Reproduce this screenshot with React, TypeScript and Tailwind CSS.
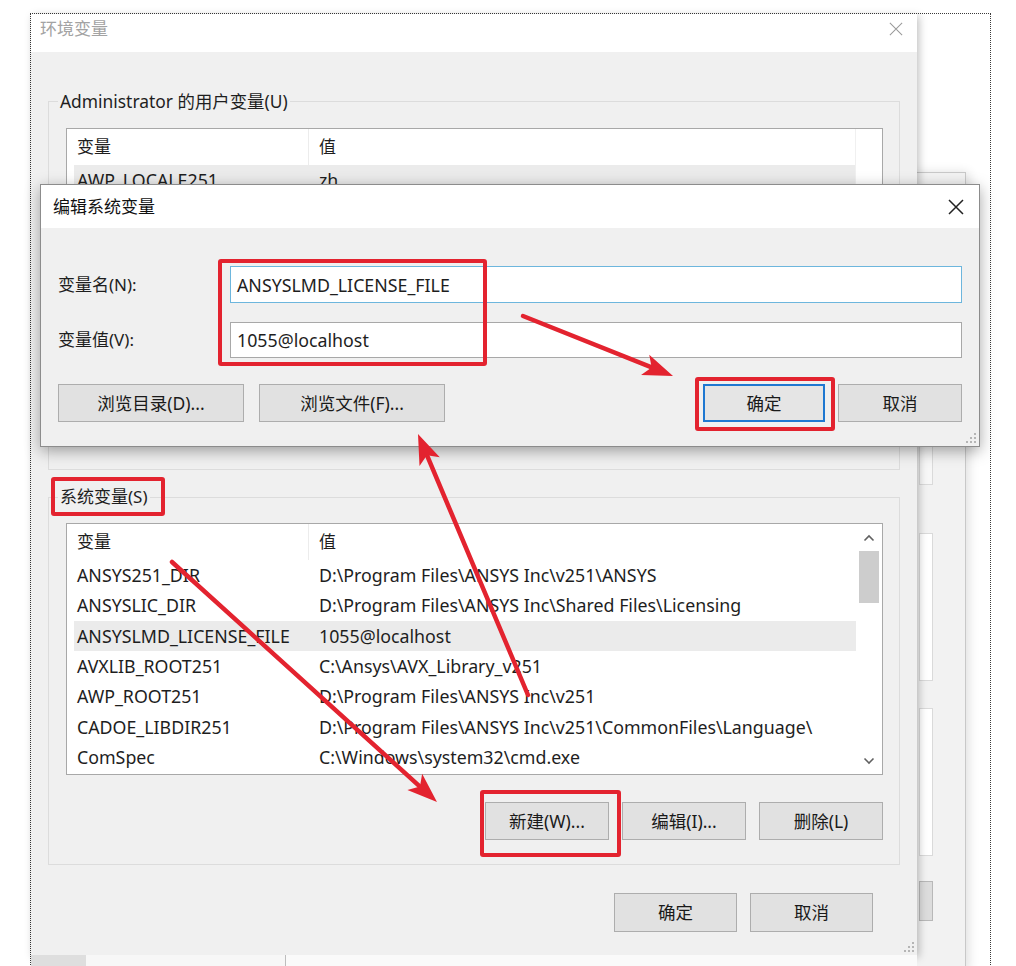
import React from 'react';

const RED = '#e3232f';

type Row = { name: string; value: string; selected?: boolean };

const userRows: Row[] = [{ name: 'AWP_LOCALE251', value: 'zh', selected: true }];

const sysRows: Row[] = [
  { name: 'ANSYS251_DIR', value: 'D:\\Program Files\\ANSYS Inc\\v251\\ANSYS' },
  { name: 'ANSYSLIC_DIR', value: 'D:\\Program Files\\ANSYS Inc\\Shared Files\\Licensing' },
  { name: 'ANSYSLMD_LICENSE_FILE', value: '1055@localhost', selected: true },
  { name: 'AVXLIB_ROOT251', value: 'C:\\Ansys\\AVX_Library_v251' },
  { name: 'AWP_ROOT251', value: 'D:\\Program Files\\ANSYS Inc\\v251' },
  { name: 'CADOE_LIBDIR251', value: 'D:\\Program Files\\ANSYS Inc\\v251\\CommonFiles\\Language\\' },
  { name: 'ComSpec', value: 'C:\\Windows\\system32\\cmd.exe' },
];

// ---------------------- Icons ----------------------
function CloseIcon({ size, color, width }: { size: number; color: string; width: number }) {
  return (
    <svg width={size} height={size} viewBox="0 0 16 16">
      <path d="M1 1 L15 15 M15 1 L1 15" stroke={color} strokeWidth={width} fill="none" />
    </svg>
  );
}

function Chevron({ up }: { up?: boolean }) {
  return (
    <svg width="12" height="8" viewBox="0 0 12 8">
      <path d={up ? 'M1.5 6.5 L6 2 L10.5 6.5' : 'M1.5 1.5 L6 6 L10.5 1.5'} stroke="#606060" strokeWidth="1.6" fill="none" />
    </svg>
  );
}

function Grip() {
  return (
    <svg width="10" height="10" viewBox="0 0 10 10" className="absolute right-[3px] bottom-[3px]">
      <rect x="8" y="0" width="2" height="2" fill="#b5b5b5" />
      <rect x="4" y="4" width="2" height="2" fill="#b5b5b5" />
      <rect x="8" y="4" width="2" height="2" fill="#b5b5b5" />
      <rect x="0" y="8" width="2" height="2" fill="#b5b5b5" />
      <rect x="4" y="8" width="2" height="2" fill="#b5b5b5" />
      <rect x="8" y="8" width="2" height="2" fill="#b5b5b5" />
    </svg>
  );
}

function Arrow({ x1, y1, x2, y2 }: { x1: number; y1: number; x2: number; y2: number }) {
  const dx = x2 - x1;
  const dy = y2 - y1;
  const len = Math.hypot(dx, dy);
  const ux = dx / len;
  const uy = dy / len;
  const head = 30;
  const half = 11;
  const bx = x2 - ux * head;
  const by = y2 - uy * head;
  const nx = bx + ux * 7;
  const ny = by + uy * 7;
  const px = -uy;
  const py = ux;
  const pts = `${x2},${y2} ${bx + px * half},${by + py * half} ${nx},${ny} ${bx - px * half},${by - py * half}`;
  return (
    <g>
      <line x1={x1} y1={y1} x2={nx} y2={ny} stroke={RED} strokeWidth={4.5} strokeLinecap="round" />
      <polygon points={pts} fill={RED} />
    </g>
  );
}

// ---------------------- Pieces ----------------------
function WinButton({ children, className = '', focus }: { children: React.ReactNode; className?: string; focus?: boolean }) {
  return (
    <button
      className={`flex items-center justify-center text-[17.5px] text-[#1a1a1a] ${
        focus ? 'border-2 border-[#1f78d1] bg-[#e5e5e5]' : 'border border-[#adadad] bg-[#e1e1e1]'
      } ${className}`}
    >
      {children}
    </button>
  );
}

function VarList({ rows, heightClass, scroll }: { rows: Row[]; heightClass: string; scroll?: boolean }) {
  return (
    <div className={`${heightClass} flex border border-[#a8a8a8] bg-white overflow-hidden`}>
      <div className="flex-1 flex flex-col">
        <div className="h-[36px] flex items-stretch shrink-0">
          <div className="w-[242px] pl-[10px] flex items-center border-r border-[#ececec]">变量</div>
          <div className="pl-[10px] flex items-center">值</div>
        </div>
        {rows.map((r) => (
          <div
            key={r.name}
            className={`h-[30.3px] shrink-0 ml-[7px] flex items-center leading-[20px] text-[17.8px] ${r.selected ? 'bg-[#ebebeb]' : ''}`}
          >
            <div className="w-[235px] pl-[3px] whitespace-nowrap">{r.name}</div>
            <div className="pl-[10px] whitespace-nowrap">{r.value}</div>
          </div>
        ))}
      </div>
      {scroll ? (
        <div className="w-[26px] flex flex-col items-center">
          <div className="h-[27px] flex items-center justify-center">
            <Chevron up />
          </div>
          <div className="w-[20px] h-[52px] bg-[#cdcdcd]" />
          <div className="flex-1" />
          <div className="h-[26px] flex items-center justify-center">
            <Chevron />
          </div>
        </div>
      ) : (
        <div className="w-[27px] border-l border-[#f0f0f0]" />
      )}
    </div>
  );
}

function RedBox({ className }: { className: string }) {
  return <div className={`absolute border-4 border-[#e3232f] rounded-[3px] ${className}`} />;
}

// ---------------------- Page ----------------------
export default function App() {
  return (
    <div className="relative w-[1016px] h-[966px] bg-white overflow-hidden font-['Noto_Sans','Noto_Sans_CJK_SC',sans-serif] text-[17px] text-[#1e1e1e]">
      {/* capture frame */}
      <div className="absolute left-[30px] top-[13px] w-[961px] h-[980px] border border-dotted border-[#3a3a3a]" />

      {/* window behind */}
      <div className="absolute left-[890px] top-[172px] w-[76px] h-[800px] bg-[#f2f2f2] border border-[#c8c8c8] shadow-[3px_0_10px_rgba(0,0,0,0.12)] flex flex-col pl-[28px] pt-[12px]">
        <div className="w-[14px] h-[300px] border border-[#dadada] bg-[#f7f7f7]" />
        <div className="w-[14px] h-[148px] mt-[48px] border border-[#dadada] bg-white" />
        <div className="w-[14px] h-[148px] mt-[27px] border border-[#dadada] bg-white" />
        <div className="w-[14px] h-[40px] mt-[25px] border border-[#b8b8b8] bg-[#dcdcdc]" />
      </div>

      {/* 环境变量 */}
      <div className="absolute left-[31px] top-[14px] w-[886px] h-[941px] flex flex-col bg-[#f0f0f0] shadow-[2px_2px_8px_rgba(0,0,0,0.25)]">
        <div className="h-[38px] shrink-0 bg-white flex items-center justify-between pl-[9px] pr-[14px] pb-[9px]">
          <span className="text-[#a3a3a3]">环境变量</span>
          <CloseIcon size={14} color="#9a9a9a" width={1.2} />
        </div>
        <div className="flex-1 flex flex-col px-[17px]">
          <fieldset className="mt-[38px] h-[380px] border border-[#dcdcdc] pl-[17px] pr-[16px]">
            <legend className="-ml-[8px] px-[2px] leading-[22px] text-[17.4px]">Administrator 的用户变量(U)</legend>
            <div className="mt-[16px]">
              <VarList rows={userRows} heightClass="h-[272px]" />
            </div>
          </fieldset>

          <fieldset className="mt-[16px] border border-[#dcdcdc] pl-[17px] pr-[16px] pb-[24px]">
            <legend className="-ml-[8px] px-[2px] leading-[22px]">系统变量(S)</legend>
            <div className="mt-[15px]">
              <VarList rows={sysRows} heightClass="h-[252px]" scroll />
            </div>
            <div className="mt-[27px] flex justify-end gap-[13px]">
              <WinButton className="w-[124px] h-[38px]">新建(W)...</WinButton>
              <WinButton className="w-[124px] h-[38px]">编辑(I)...</WinButton>
              <WinButton className="w-[124px] h-[38px]">删除(L)</WinButton>
            </div>
          </fieldset>

          <div className="mt-[28px] mr-[27px] flex justify-end gap-[13px]">
            <WinButton className="w-[123px] h-[39px]">确定</WinButton>
            <WinButton className="w-[123px] h-[39px]">取消</WinButton>
          </div>
        </div>
        <Grip />
      </div>

      {/* strip under the main window */}
      <div className="absolute left-[31px] top-[955px] w-[886px] h-[11px] flex">
        <div className="w-[55px] bg-[#dedede]" />
        <div className="w-[200px] bg-[#f7f7f7] border-r border-[#bdbdbd]" />
        <div className="flex-1 bg-[#fafafa]" />
      </div>

      {/* 编辑系统变量 */}
      <div className="absolute left-[40px] top-[184px] w-[940px] h-[263px] flex flex-col bg-[#f0f0f0] border border-[#8c8c8c] shadow-[0_4px_14px_rgba(0,0,0,0.35)]">
        <div className="h-[43px] shrink-0 bg-white flex items-center justify-between pl-[12px] pr-[15px]">
          <span className="text-[#111] leading-[22px]">编辑系统变量</span>
          <CloseIcon size={16} color="#222" width={1.5} />
        </div>
        <div className="flex-1 flex flex-col pt-[38px] px-[17px]">
          <div className="h-[37px] flex items-center">
            <span className="w-[172px] leading-[22px]">变量名(N):</span>
            <div className="flex-1 h-full flex items-center pl-[6px] bg-white border border-[#6db6dd] text-[17.8px] leading-[22px]">
              ANSYSLMD_LICENSE_FILE
            </div>
          </div>
          <div className="mt-[19px] h-[36px] flex items-center">
            <span className="w-[172px] leading-[22px]">变量值(V):</span>
            <div className="flex-1 h-full flex items-center pl-[6px] bg-white border border-[#a8a8a8] text-[17.8px] leading-[22px]">
              1055@localhost
            </div>
          </div>
          <div className="mt-[26px] flex items-center">
            <WinButton className="w-[186px] h-[38px]">浏览目录(D)...</WinButton>
            <WinButton className="ml-[15px] w-[186px] h-[38px]">浏览文件(F)...</WinButton>
            <div className="flex-1" />
            <WinButton focus className="w-[122px] h-[38px]">
              确定
            </WinButton>
            <WinButton className="ml-[13px] w-[124px] h-[38px]">取消</WinButton>
          </div>
        </div>
        <Grip />
      </div>

      {/* annotations */}
      <RedBox className="left-[218px] top-[259px] w-[269px] h-[107px]" />
      <RedBox className="left-[695px] top-[377px] w-[140px] h-[54px]" />
      <RedBox className="left-[51px] top-[477px] w-[114px] h-[39px]" />
      <RedBox className="left-[480px] top-[790px] w-[141px] h-[67px]" />

      <svg className="absolute left-0 top-0 pointer-events-none" width="1016" height="966">
        <Arrow x1={523} y1={316} x2={673} y2={376} />
        <Arrow x1={528} y1={695} x2={418} y2={434} />
        <Arrow x1={172} y1={562} x2={437} y2={802} />
      </svg>
    </div>
  );
}
